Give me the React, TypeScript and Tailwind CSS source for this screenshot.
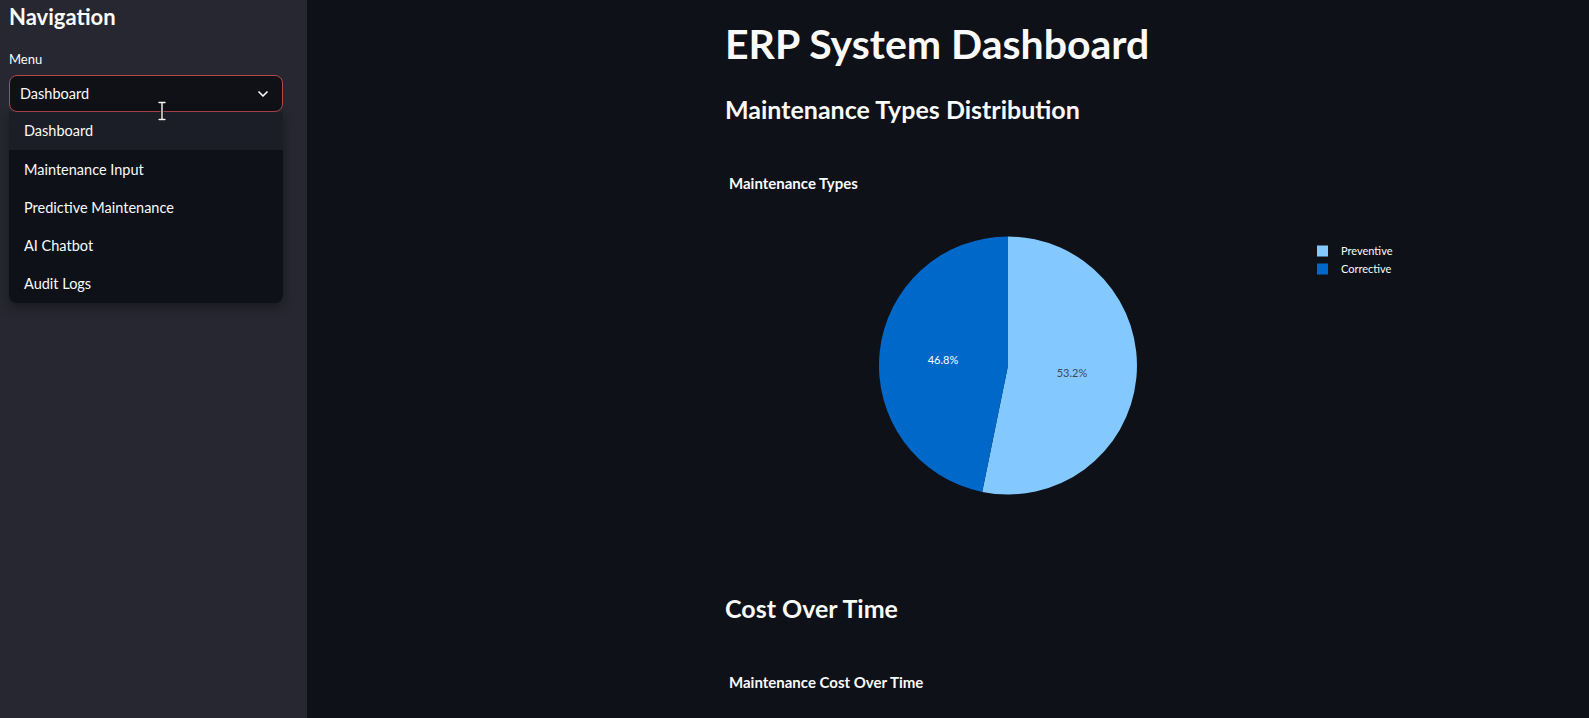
import React from 'react'
import { ChevronDown } from 'lucide-react'

const menuItems = ['Dashboard', 'Maintenance Input', 'Predictive Maintenance', 'AI Chatbot', 'Audit Logs']

function IBeam() {
    return (
        <svg width="10" height="20" viewBox="0 0 10 20" className="absolute left-[157px] top-[101px]">
            <path d="M2 1.5h6M5 1.5v17M2 18.5h6" stroke="#111" strokeWidth="3" strokeLinecap="round" fill="none" />
            <path d="M2 1.5h6M5 1.5v17M2 18.5h6" stroke="#f5f5f5" strokeWidth="1.4" strokeLinecap="round" fill="none" />
        </svg>
    )
}

function Sidebar() {
    return (
        <aside className="relative w-[307px] shrink-0 bg-[#262730] px-[9px]">
            <h1 className="pt-[2px] text-[22px] leading-[30px] font-bold text-[#fafafa]">Navigation</h1>
            <p className="mt-[19px] text-[13px] leading-[16px] text-[#fafafa]">Menu</p>
            <div className="mt-[8px] w-[274px]">
                <div className="flex h-[37px] items-center justify-between rounded-[8px] border border-[#b4484a] bg-[#0f1117] pl-[10px] pr-[11px]">
                    <span className="text-[14.5px] text-[#fafafa]">Dashboard</span>
                    <ChevronDown className="h-[16px] w-[16px] text-[#fafafa]" strokeWidth={2.6} />
                </div>
                <ul className="overflow-hidden rounded-b-[8px] bg-[#0e1117] shadow-[0_4px_12px_rgba(0,0,0,0.35)]">
                    {menuItems.map((item, i) => (
                        <li
                            key={item}
                            className={`flex h-[38.3px] items-center pl-[15px] text-[14.5px] text-[#fafafa] ${i === 0 ? 'bg-[#1b1e26]' : ''}`}
                        >
                            {item}
                        </li>
                    ))}
                </ul>
            </div>
            <IBeam />
        </aside>
    )
}

function PieChart() {
    // 53.2% preventive from 12 o'clock clockwise, rest corrective
    return (
        <svg width="700" height="350" viewBox="0 0 700 350" className="block">
            <g transform="translate(154 44.5)">
                <path d="M129 129 L129 0 A129 129 0 1 1 103.2 255.4 Z" fill="#83c9ff" />
                <path d="M129 129 L103.2 255.4 A129 129 0 0 1 129 0 Z" fill="#0068c9" />
                <text x="64" y="127" textAnchor="middle" fontSize="11" fill="#ffffff" fontFamily="Lato, sans-serif">46.8%</text>
                <text x="193" y="140" textAnchor="middle" fontSize="11" fill="#3e4a5a" fontFamily="Lato, sans-serif">53.2%</text>
            </g>
            <g fontFamily="Lato, sans-serif" fontSize="11" fill="#fafafa">
                <rect x="592" y="53.5" width="11" height="11" fill="#83c9ff" />
                <text x="616" y="62.5">Preventive</text>
                <rect x="592" y="71.5" width="11" height="11" fill="#0068c9" />
                <text x="616" y="80.5">Corrective</text>
            </g>
        </svg>
    )
}

export default function App() {
    return (
        <div className="flex h-[718px] w-[1589px] overflow-hidden bg-[#0e1117] font-['Lato',sans-serif]">
            <Sidebar />
            <main className="flex-1 pl-[418px] text-[#fafafa]">
                <h1 className="pt-[19px] text-[41px] leading-[50px] font-bold">ERP System Dashboard</h1>
                <h2 className="mt-[23px] text-[25px] leading-[34px] font-bold">Maintenance Types Distribution</h2>
                <section className="mt-[48px]">
                    <h3 className="pl-[4px] text-[15px] leading-[18px] font-bold">Maintenance Types</h3>
                    <PieChart />
                </section>
                <h2 className="mt-[49px] text-[25px] leading-[34px] font-bold">Cost Over Time</h2>
                <h3 className="mt-[48px] pl-[4px] text-[15px] leading-[18px] font-bold">Maintenance Cost Over Time</h3>
            </main>
        </div>
    )
}
